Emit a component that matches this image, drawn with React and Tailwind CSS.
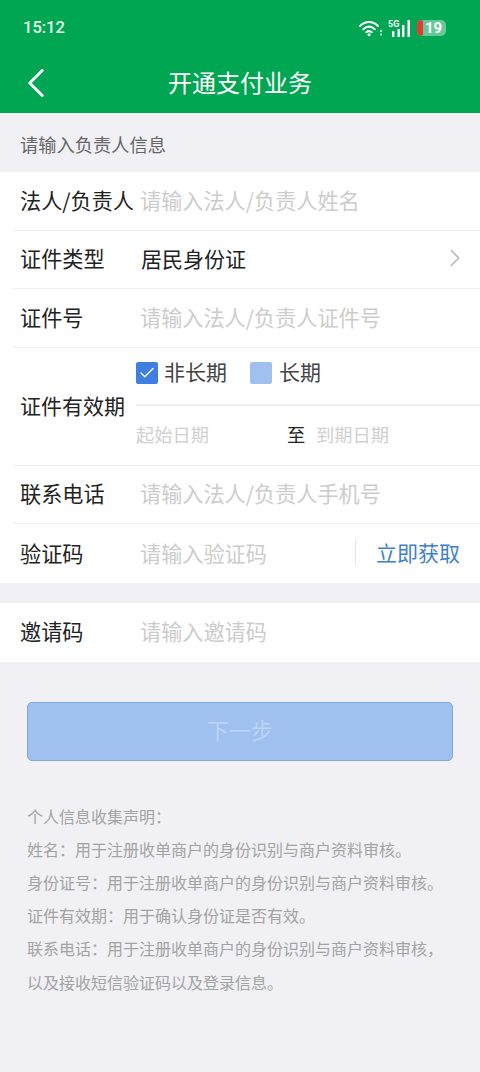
import React from 'react';
import { ChevronRight, ChevronLeft, Check } from 'lucide-react';

const Row = ({ label, placeholder, value, right, last }) => (
  <div className={`h-[58.7px] pb-[3px] flex items-center ml-[13px] ${last ? '' : 'border-b border-[#eeeeee]'}`}>
    <span className="w-[127px] pl-[7px] shrink-0 text-[21.15px] leading-none text-[#222222] whitespace-nowrap">{label}</span>
    {value
      ? <span className="ml-[1px] text-[21px] leading-none text-[#222222]">{value}</span>
      : <span className="text-[21.15px] leading-none text-[#cccccc]">{placeholder}</span>}
    {right}
  </div>
);

const notes = [
  '个人信息收集声明：',
  '姓名：用于注册收单商户的身份识别与商户资料审核。',
  '身份证号：用于注册收单商户的身份识别与商户资料审核。',
  '证件有效期：用于确认身份证是否有效。',
  '联系电话：用于注册收单商户的身份识别与商户资料审核，',
  '以及接收短信验证码以及登录信息。',
];

export default function App() {
  return (
    <div className="w-[480px] h-[1072px] overflow-hidden bg-[#f0f0f5] font-['Noto_Sans_CJK_SC',sans-serif]">
      {/* status bar + title */}
      <div className="h-[113px] bg-[#00a651] text-white">
        <div className="h-[56px] flex items-center justify-between pl-[23px] pr-[34px]">
          <span className="text-[16.5px] font-medium font-['Roboto',sans-serif] text-[#e6f6ec]">15:12</span>
          <div className="flex items-center">
            <svg width="24" height="17" viewBox="0 0 24 17" fill="none" stroke="#fff" strokeWidth="2" strokeLinecap="round">
              <path d="M1 6C6.5 0.8 13.5 0.8 19 6" />
              <path d="M4.2 9.2C8 5.8 12 5.8 15.8 9.2" />
              <path d="M7.2 12.2C9 10.8 11 10.8 12.8 12.2" />
              <circle cx="10" cy="14.8" r="1.5" fill="#fff" stroke="none" />
              <path d="M22 10.5v1M22 14v1" strokeWidth="1.4" />
            </svg>
            <div className="relative ml-[5px] w-[22px] h-[17px]">
              <span className="absolute left-0 -top-[1px] text-[9px] leading-[10px] font-bold font-['Roboto',sans-serif]">5G</span>
              <svg className="absolute inset-0" width="22" height="17" viewBox="0 0 22 17" fill="#fff">
                <rect x="4" y="11" width="2.4" height="6" />
                <rect x="9.5" y="9" width="2.4" height="8" />
                <rect x="14" y="5" width="2.4" height="12" />
                <rect x="19.5" y="0" width="2.4" height="17" />
              </svg>
            </div>
            <div className="ml-[7px] w-[29px] h-[16px] rounded-[5px] bg-[#66c997] overflow-hidden flex items-center">
              <div className="w-[6px] h-full bg-[#e8392e] rounded-[2px]" />
              <span className="ml-[2px] text-[15px] leading-none font-bold font-['Roboto',sans-serif] text-white">19</span>
            </div>
          </div>
        </div>
        <div className="relative h-[57px] pb-[6px] flex items-center justify-center">
          <ChevronLeft className="absolute left-[11px] top-[2px]" size={50} strokeWidth={1.4} color="#fff" />
          <span className="text-[24px] leading-none">开通支付业务</span>
        </div>
      </div>

      <div className="h-[59px] pt-[4px] flex items-center pl-[20px] text-[18.25px] text-[#666666] leading-none">请输入负责人信息</div>

      <div className="bg-white">
        <Row label="法人/负责人" placeholder="请输入法人/负责人姓名" />
        <Row label="证件类型" value="居民身份证" right={<ChevronRight className="ml-auto mr-[10px] text-[#b5b5b5]" size={30} strokeWidth={1.2} />} />
        <Row label="证件号" placeholder="请输入法人/负责人证件号" />
        <div className="h-[117.5px] flex items-center ml-[13px] border-b border-[#eeeeee]">
          <span className="w-[123px] pl-[7px] pb-[1px] shrink-0 text-[21px] leading-none text-[#222222] whitespace-nowrap">证件有效期</span>
          <div className="flex-1">
            <div className="h-[58px] pb-[6px] flex items-center border-b-2 border-[#f0f0f0]">
              <span className="w-[22px] h-[22px] rounded-[2px] bg-[#3f7fe0] flex items-center justify-center">
                <Check size={18} strokeWidth={1.8} color="#fff" />
              </span>
              <span className="ml-[6px] pb-[4px] text-[21px] leading-none text-[#444444]">非长期</span>
              <span className="ml-[23px] w-[22px] h-[22px] rounded-[2px] bg-[#a0c0f0]" />
              <span className="ml-[7px] pb-[4px] text-[21px] leading-none text-[#444444]">长期</span>
            </div>
            <div className="h-[58px] pb-[2px] flex items-center text-[18.25px] leading-none text-[#d0d0d0]">
              <span className="w-[151px]">起始日期</span>
              <span className="w-[29px] text-[#222222]">至</span>
              <span>到期日期</span>
            </div>
          </div>
        </div>
        <Row label="联系电话" placeholder="请输入法人/负责人手机号" />
        <Row
          label="验证码"
          placeholder="请输入验证码"
          last
          right={
            <div className="ml-auto h-[27px] w-[125px] border-l border-[#e5e5e5] flex items-center pl-[20px] text-[21px] leading-none text-[#3f7fd0] whitespace-nowrap">立即获取</div>
          }
        />
      </div>

      <div className="mt-[20px] bg-white">
        <Row label="邀请码" placeholder="请输入邀请码" last />
      </div>

      <div className="mt-[40px] mx-[27px] h-[59px] pb-[4px] rounded-[5px] bg-[#a0c0f0] border border-[#7fa8e3] flex items-center justify-center text-[22px] leading-none text-[#bcd3f5]">下一步</div>

      <div className="mt-[39px] mx-[27px] text-[16px] leading-[33.2px] text-[#a3a3a3] whitespace-nowrap">
        {notes.map((n) => <div key={n}>{n}</div>)}
      </div>
    </div>
  );
}
